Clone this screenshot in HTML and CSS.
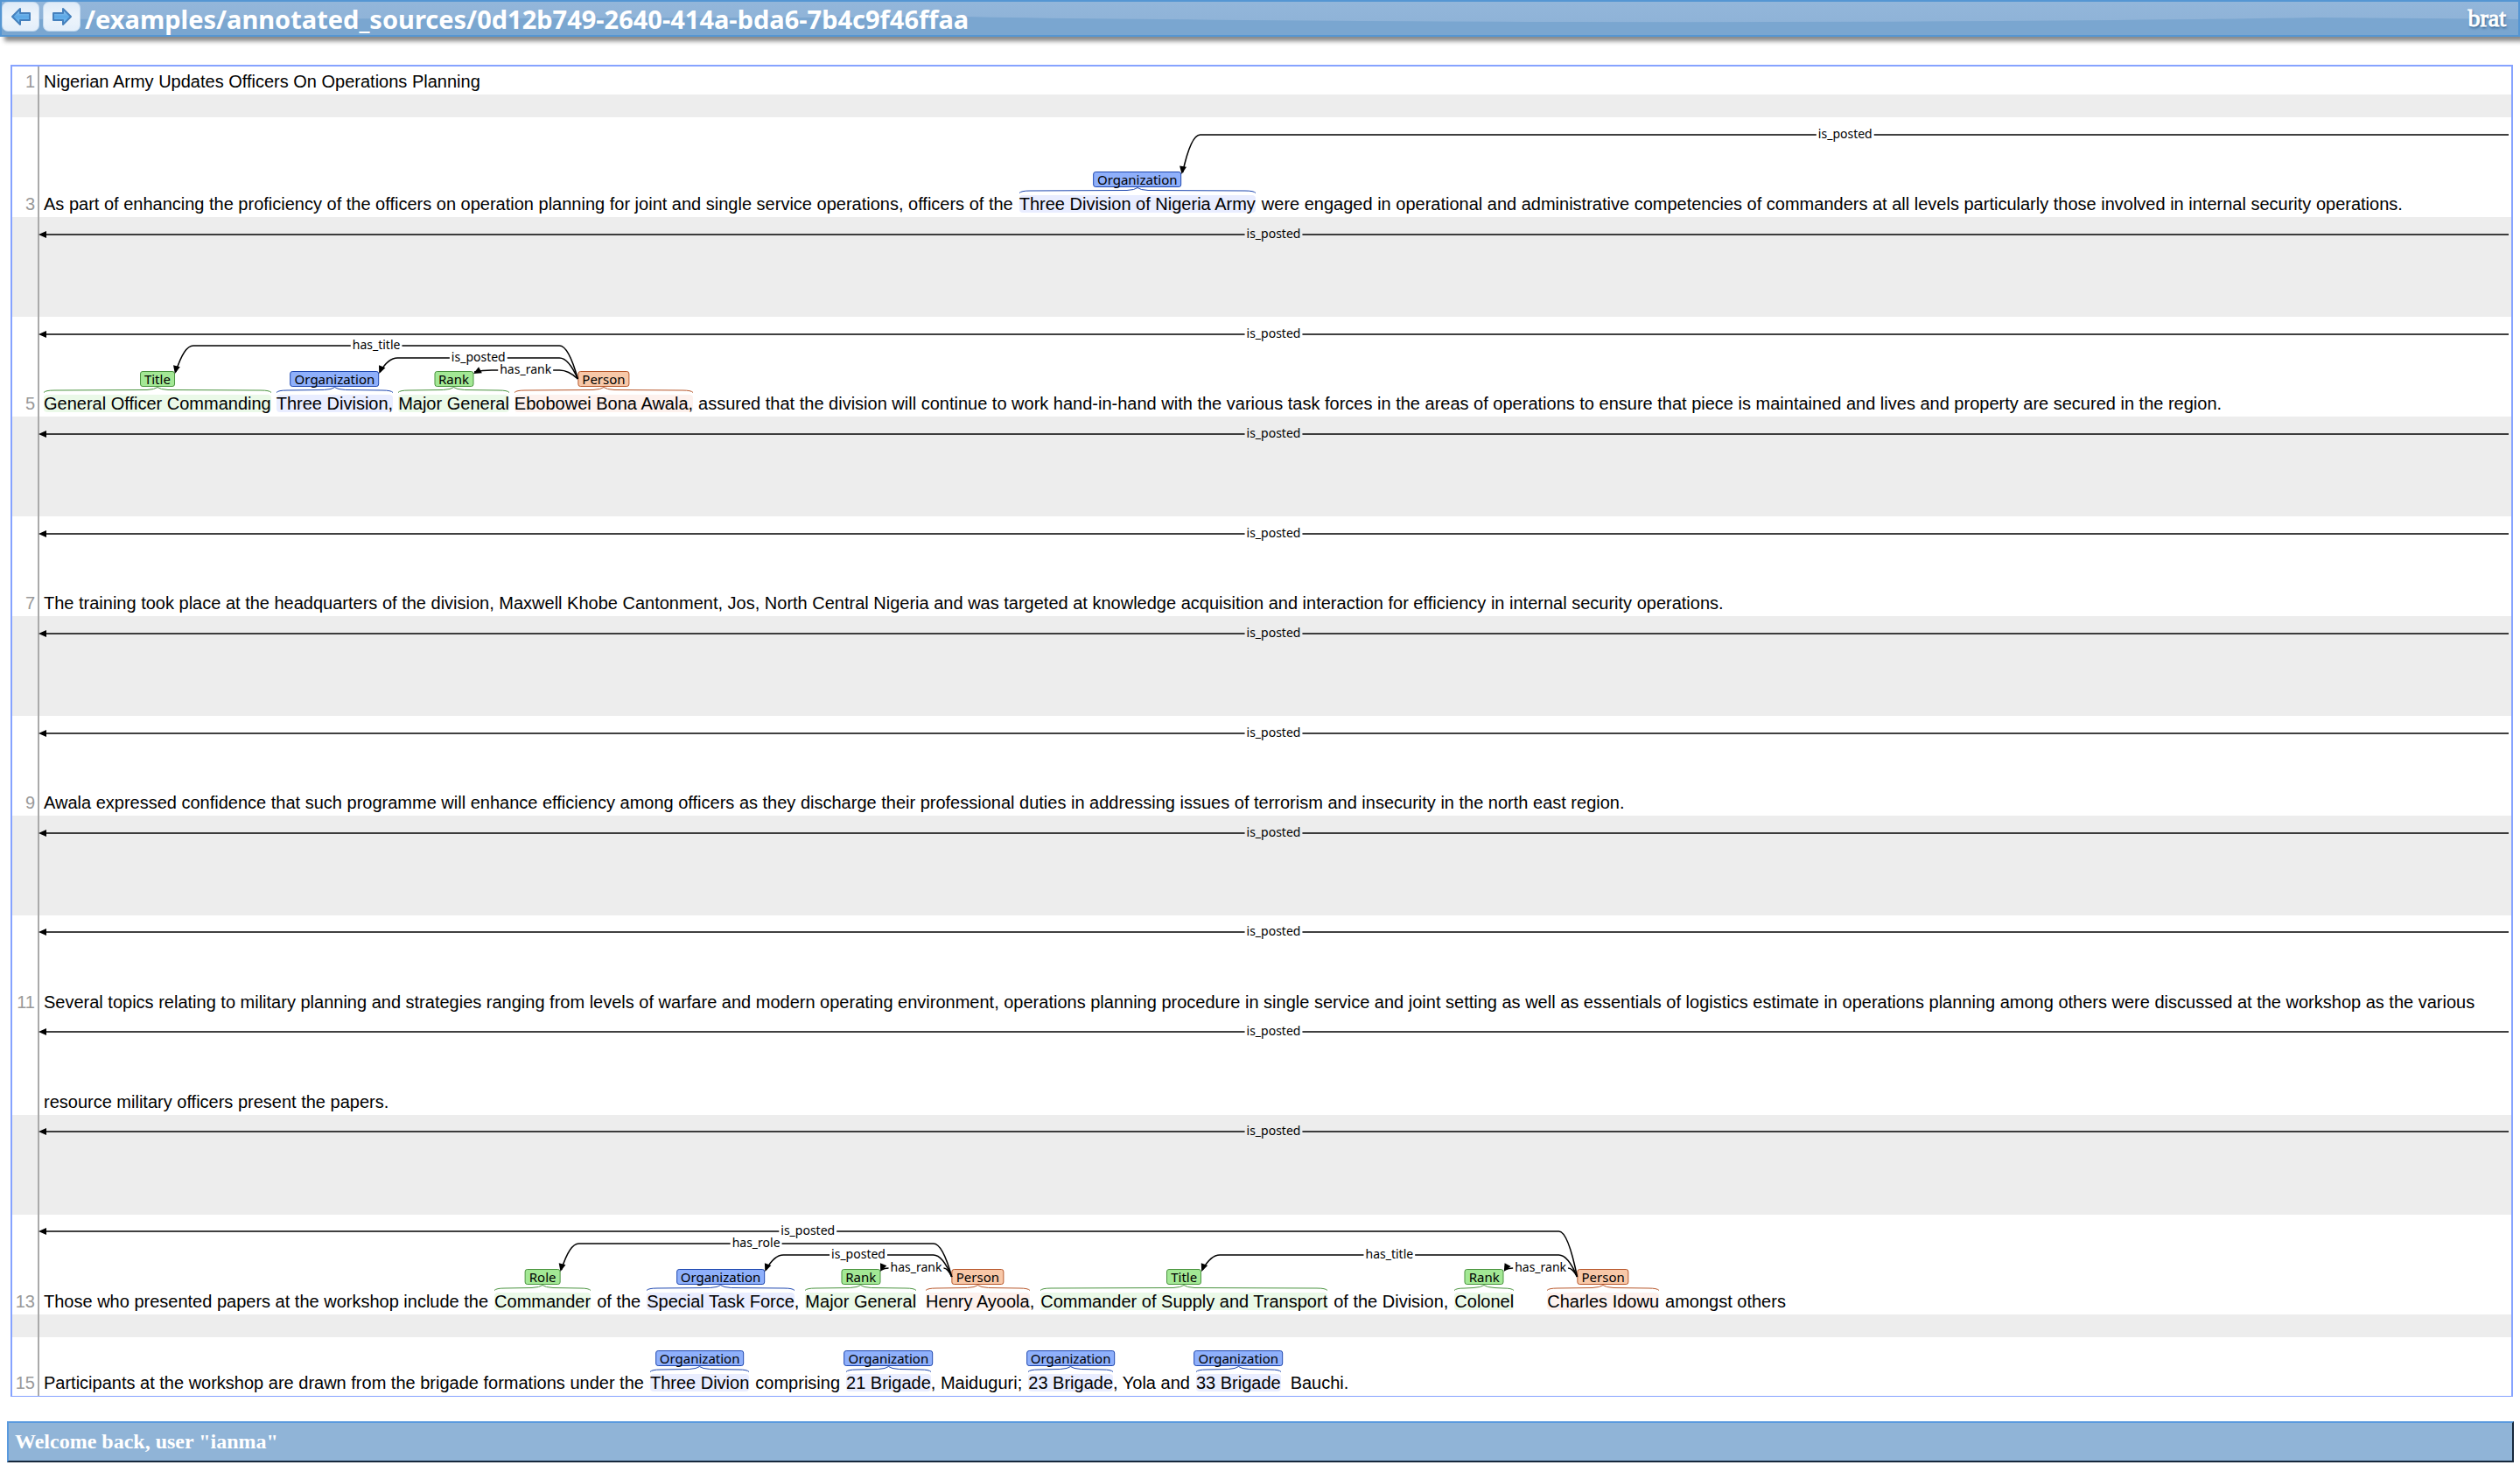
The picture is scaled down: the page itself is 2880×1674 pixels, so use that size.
FILE: index.html
```html
<!DOCTYPE html>
<html lang="en">
<head>
<meta charset="utf-8">
<title>brat: /examples/annotated_sources/0d12b749-2640-414a-bda6-7b4c9f46ffaa</title>
<link rel="stylesheet" href="styles.css">
</head>
<body>
<header class="topbar">
  <svg class="gloss" viewBox="0 0 100 38" preserveAspectRatio="none" aria-hidden="true"><path d="M0 20 Q25 19 38 17 Q45 21 62 23 Q80 24 92 18 L100 20 V38 H0 Z"/></svg>
  <nav class="pager">
    <button class="nav-btn" type="button" aria-label="Previous document">
      <svg viewBox="0 0 24 24" width="24" height="24"><defs><linearGradient id="blue" x1="0" y1="0" x2="0" y2="1"><stop offset="0" stop-color="#9ccbf1"/><stop offset=".5" stop-color="#5ba7e6"/><stop offset="1" stop-color="#7cc4f6"/></linearGradient></defs><path class="arrow" d="M2 12 L11 3 V8 H22 V16 H11 V21 Z"/></svg>
    </button>
    <button class="nav-btn" type="button" aria-label="Next document">
      <svg viewBox="0 0 24 24" width="24" height="24"><path class="arrow" d="M22 12 L13 3 V8 H2 V16 H13 V21 Z"/></svg>
    </button>
  </nav>
  <h1 class="doc-name">/examples/annotated_sources/0d12b749-2640-414a-bda6-7b4c9f46ffaa</h1>
  <a class="logo" href="#">brat</a>
</header>

<main class="document">
  <div class="line title"><span class="num">1</span><p class="text">Nigerian Army Updates Officers On Operations Planning</p></div>
  <div class="line blank thin"><span class="num"></span></div>
  <div class="line" data-arcs='[["R","org3",20,"is_posted"]]'><span class="num">3</span><p class="text roomy"><span>As part of enhancing the proficiency of the officers on operation planning for joint and single service operations, officers of the</span><span class="mention org" id="org3" data-type="Organization">Three Division of Nigeria Army</span><span>were engaged in operational and administrative competencies of commanders at all levels particularly those involved in internal security operations.</span></p></div>
  <div class="line blank" data-arcs='[["R","L",20,"is_posted"]]'><span class="num"></span></div>
  <div class="line" data-arcs='[["R","L",20,"is_posted"],["per5","tit5",33,"has_title"],["per5","org5",47,"is_posted"],["per5","ran5",61,"has_rank"]]'><span class="num">5</span><p class="text"><span class="mention green" id="tit5" data-type="Title">General Officer Commanding</span><span class="mention org" id="org5" data-type="Organization">Three Division,</span><span class="mention green" id="ran5" data-type="Rank">Major General</span><span class="mention person" id="per5" data-type="Person">Ebobowei Bona Awala,</span><span>assured that the division will continue to work hand-in-hand with the various task forces in the areas of operations to ensure that piece is maintained and lives and property are secured in the region.</span></p></div>
  <div class="line blank" data-arcs='[["R","L",20,"is_posted"]]'><span class="num"></span></div>
  <div class="line" data-arcs='[["R","L",20,"is_posted"]]'><span class="num">7</span><p class="text">The training took place at the headquarters of the division, Maxwell Khobe Cantonment, Jos, North Central Nigeria and was targeted at knowledge acquisition and interaction for efficiency in internal security operations.</p></div>
  <div class="line blank" data-arcs='[["R","L",20,"is_posted"]]'><span class="num"></span></div>
  <div class="line" data-arcs='[["R","L",20,"is_posted"]]'><span class="num">9</span><p class="text">Awala expressed confidence that such programme will enhance efficiency among officers as they discharge their professional duties in addressing issues of terrorism and insecurity in the north east region.</p></div>
  <div class="line blank" data-arcs='[["R","L",20,"is_posted"]]'><span class="num"></span></div>
  <div class="line" data-arcs='[["R","L",19,"is_posted"]]'><span class="num">11</span><p class="text">Several topics relating to military planning and strategies ranging from levels of warfare and modern operating environment, operations planning procedure in single service and joint setting as well as essentials of logistics estimate in operations planning among others were discussed at the workshop as the various</p></div>
  <div class="line" data-arcs='[["R","L",19,"is_posted"]]'><span class="num"></span><p class="text">resource military officers present the papers.</p></div>
  <div class="line blank" data-arcs='[["R","L",19,"is_posted"]]'><span class="num"></span></div>
  <div class="line" data-arcs='[["per13b","L",19,"is_posted"],["per13a","rol13",33,"has_role"],["per13a","org13",46,"is_posted"],["per13a","ran13a",61,"has_rank"],["per13b","tit13",46,"has_title"],["per13b","ran13b",61,"has_rank"]]'><span class="num">13</span><p class="text roomy"><span>Those who presented papers at the workshop include the</span><span class="mention green" id="rol13" data-type="Role">Commander</span><span>of the</span><span><span class="mention org" id="org13" data-type="Organization">Special Task Force</span>,</span><span class="mention green" id="ran13a" data-type="Rank">Major General</span><span class="spread"><span class="mention person" id="per13a" data-type="Person">Henry Ayoola</span>,</span><span class="mention green" id="tit13" data-type="Title">Commander of Supply and Transport</span><span>of the Division,</span><span class="mention green" id="ran13b" data-type="Rank">Colonel</span><span class="mention person arc-room" id="per13b" data-type="Person">Charles Idowu</span><span>amongst others</span></p></div>
  <div class="line blank thin"><span class="num"></span></div>
  <div class="line last"><span class="num">15</span><p class="text roomy"><span>Participants at the workshop are drawn from the brigade formations under the</span><span class="mention org" data-type="Organization">Three Divion</span><span>comprising</span><span><span class="mention org" data-type="Organization">21 Brigade</span>, Maiduguri;</span><span><span class="mention org" data-type="Organization">23 Brigade</span>, Yola and</span><span class="mention org" data-type="Organization">33 Brigade</span><span class="spread">Bauchi.</span></p></div>
</main>

<footer class="messages">Welcome back, user "ianma"</footer>
<script src="arcs.js"></script>
</body>
</html>
```
FILE: styles.css
```css
* { box-sizing: border-box; }

body {
  margin: 0;
  background: #fff;
  color: #000;
  font-family: "Liberation Sans", Arial, sans-serif;
  font-size: 20px;
  line-height: 20px;
}

.topbar {
  position: relative;
  display: flex;
  align-items: center;
  height: 42px;
  border: 2px solid #5596d3;
  background: linear-gradient(#93b6da, #8cb1d6);
  box-shadow: 5px 5px 5px #888;
}

.gloss {
  position: absolute;
  inset: 0;
  width: 100%;
  height: 100%;
  fill: #7aa6d0;
}

.pager {
  position: relative;
  display: flex;
  gap: 4px;
  align-self: flex-start;
}

.nav-btn {
  display: flex;
  align-items: center;
  justify-content: center;
  width: 43px;
  height: 34px;
  padding: 0;
  border: 1px solid #c5dbf0;
  border-radius: 7px;
  background: linear-gradient(#dfebf8, #edf4fb 50%, #e3eefa);
}

.arrow {
  fill: url(#blue);
  stroke: #4580bd;
  stroke-width: 2;
  stroke-linejoin: round;
}

.doc-name {
  position: relative;
  flex: 1;
  margin: 0 0 0 5px;
  padding-top: 2px;
  color: #fff;
  font: bold 29px/36px "Noto Sans", "Open Sans", sans-serif;
}

.logo {
  position: relative;
  margin-right: 14px;
  color: #fff;
  font: 28px/34px "Liberation Serif", serif;
  text-decoration: none;
  text-shadow: 1px 2px 3px #24507c;
  -webkit-text-stroke: 1px #fff;
}

.document {
  margin: 32px 8px 0 12px;
  border: 2px solid #86a3ff;
  border-bottom-width: 1px;
}

.line {
  position: relative;
  display: flex;
  align-items: flex-end;
  min-height: 114px;
}

.line.title { min-height: 32px; }
.line.thin { min-height: 26px; }
.line.last { min-height: 67px; }
.blank { background: #ededed; }

.num {
  align-self: stretch;
  display: flex;
  align-items: flex-end;
  justify-content: flex-end;
  flex: none;
  width: 31px;
  padding: 0 3px 5px 0;
  border-right: 2px solid #aaa;
  color: #999;
}

.text {
  display: flex;
  gap: 6px;
  margin: 0;
  padding: 0 0 5px 5px;
  white-space: nowrap;
}

.roomy { gap: 7px; }

.mention {
  position: relative;
  display: inline-block;
  border-radius: 4px;
}

.spread { margin-left: 4px; }
.arc-room { margin-left: 31px; }

.org { --fill: #8fb0fb; --edge: #1f48b0; background: #e9edff; }
.green { --fill: #a3e895; --edge: #4b9440; background: #eaf9e8; }
.person { --fill: #f8c8a8; --edge: #b8582c; background: #fdf1ed; }

.tag {
  position: absolute;
  bottom: 29px;
  left: 50%;
  height: 18px;
  padding: 0 4px;
  transform: translateX(-50%);
  border: 1px solid var(--edge);
  border-radius: 3px;
  background: var(--fill);
  font: 15px/16px "Noto Sans", "Open Sans", sans-serif;
}

.brace {
  position: absolute;
  top: -9px;
  left: 0;
  width: 100%;
  height: 7px;
  overflow: visible;
  fill: none;
  stroke: var(--edge);
}

.arcs {
  position: absolute;
  inset: 0;
  width: 100%;
  height: 100%;
  overflow: visible;
  pointer-events: none;
}

.arcs path {
  fill: none;
  stroke: #000;
  stroke-width: 1.6;
}

.arcs .head {
  fill: #000;
  stroke: none;
}

.arcs text {
  font: 14px "Noto Sans", "Open Sans", sans-serif;
  text-anchor: middle;
}

.messages {
  margin: 28px 7px 0 8px;
  padding: 0 7px;
  border: 2px solid;
  border-color: #5a9ade #16283c #16283c #5a9ade;
  background: #90b4d7;
  color: #fff;
  font: bold 24px/43px "Liberation Serif", "Times New Roman", serif;
}
```
FILE: arcs.js
```js
const NS = 'http://www.w3.org/2000/svg';
const BEND = 21;      // horizontal run of a curved arc end
const SOURCE_Y = 71;  // where an arc leaves its source tag
const TARGET_Y = 65;  // where the arrow meets its target tag

function add(parent, name, attrs) {
  const node = document.createElementNS(NS, name);
  for (const key in attrs) node.setAttribute(key, attrs[key]);
  parent.appendChild(node);
  return node;
}

function drawMention(mention) {
  const tag = document.createElement('span');
  tag.className = 'tag';
  tag.textContent = mention.dataset.type;
  const w = mention.offsetWidth;
  const m = w / 2;
  const brace = add(mention, 'svg', { class: 'brace' });
  add(brace, 'path', {
    d: `M0 6.5 Q2 4 12 4 L${m - 12} 3.5 Q${m - 3} 3 ${m} .5 Q${m + 3} 3 ${m + 12} 3.5 L${w - 12} 4 Q${w - 2} 4 ${w} 6.5`
  });
  mention.appendChild(tag);
}

function drawArcs(line) {
  const old = line.querySelector('.arcs');
  if (old) old.remove();
  const svg = add(line, 'svg', { class: 'arcs' });
  const box = line.getBoundingClientRect();
  const tagEdge = (id, side) =>
    document.getElementById(id).querySelector('.tag').getBoundingClientRect()[side] - box.left;

  for (const [from, to, y, label] of JSON.parse(line.dataset.arcs)) {
    const right = from === 'R' ? box.width - 3 : tagEdge(from, 'left');
    const left = to === 'L' ? 30 : tagEdge(to, 'right');
    const mid = (left + right) / 2;
    const text = add(svg, 'text', { x: mid, y: y + 4 });
    text.textContent = label;
    const half = text.getComputedTextLength() / 2 + 2;
    const gapL = mid - half;
    const gapR = mid + half;

    if (from === 'R') {
      add(svg, 'path', { d: `M${right} ${y} H${gapR}` });
    } else {
      const x = Math.max(right - BEND, gapR);
      add(svg, 'path', { d: `M${right} ${SOURCE_Y} Q${(x + right) / 2} ${y} ${x} ${y} H${gapR}` });
    }

    let angle = 180;
    if (to === 'L') {
      add(svg, 'path', { d: `M${left + 6} ${y} H${gapL}` });
    } else {
      const x = Math.min(left + BEND, gapL);
      const cx = (x + left) / 2;
      add(svg, 'path', { d: `M${left + 1} ${TARGET_Y - 2} Q${cx} ${y} ${x} ${y} H${gapL}` });
      angle = Math.atan2(TARGET_Y - y, left - cx + 3) * 180 / Math.PI;
    }
    const tipY = to === 'L' ? y : TARGET_Y;
    add(svg, 'path', {
      class: 'head',
      d: 'M0 0 L-9 -4 L-9 4 Z',
      transform: `translate(${left} ${tipY}) rotate(${angle})`
    });
  }
}

function drawAll() {
  document.querySelectorAll('[data-arcs]').forEach(drawArcs);
}

document.fonts.ready.then(() => {
  document.querySelectorAll('.mention').forEach(drawMention);
  drawAll();
  window.addEventListener('resize', drawAll);
});
```
